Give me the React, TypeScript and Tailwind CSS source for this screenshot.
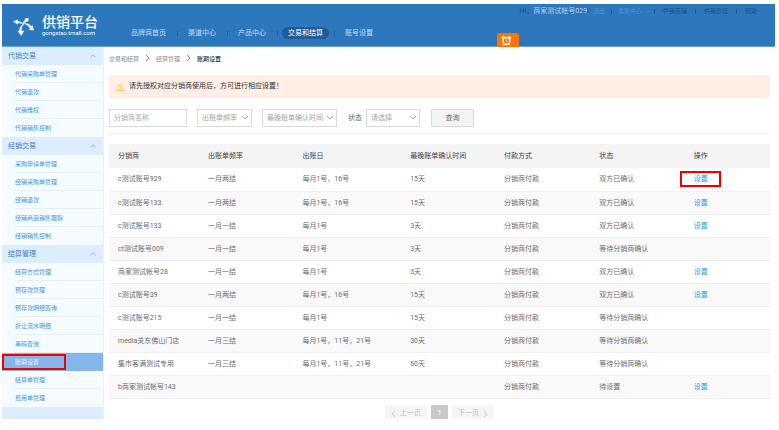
import { useState } from "react";
import clsx from "clsx";

type Account = {
  name: string;
  cycle: string;
  billingDay: string;
  deadline: string;
  status: string;
  editable: boolean;
};

const NAV_ITEMS = ["品牌商首页", "渠道中心", "产品中心", "交易和结算", "账号设置"];
const HELP_LINKS = ["供销店铺", "供销论坛", "帮助"];

const MENU = [
  { title: "代销交易", items: ["代销采购单管理", "代销退款", "代销维权", "代销销售控制"] },
  {
    title: "经销交易",
    items: ["采购申请单管理", "经销采购单管理", "经销退款", "经销商品销售跟踪", "经销销售控制"],
  },
  {
    title: "结算管理",
    items: [
      "结算方式管理",
      "预存款管理",
      "预存款明细查询",
      "折让流水明细",
      "串码查询",
      "账期设置",
      "结算单管理",
      "费用单管理",
    ],
  },
];

const COLUMNS = [
  { label: "分销商", width: "w-[13.6%]" },
  { label: "出账单频率", width: "w-[14.3%]" },
  { label: "出账日", width: "w-[16.3%]" },
  { label: "最晚账单确认时间", width: "w-[14.2%]" },
  { label: "付款方式", width: "w-[14.4%]" },
  { label: "状态", width: "w-[14.3%]" },
  { label: "操作", width: "w-[12.9%]" },
];

const ACCOUNTS: Account[] = [
  { name: "c测试账号929", cycle: "一月两结", billingDay: "每月1号，16号", deadline: "15天", status: "双方已确认", editable: true },
  { name: "c测试账号133", cycle: "一月两结", billingDay: "每月1号，16号", deadline: "15天", status: "双方已确认", editable: true },
  { name: "c测试账号133", cycle: "一月一结", billingDay: "每月1号", deadline: "3天", status: "双方已确认", editable: true },
  { name: "ct测试账号009", cycle: "一月一结", billingDay: "每月1号", deadline: "3天", status: "等待分销商确认", editable: false },
  { name: "商家测试帐号28", cycle: "一月一结", billingDay: "每月1号", deadline: "3天", status: "双方已确认", editable: true },
  { name: "c测试账号39", cycle: "一月两结", billingDay: "每月1号，16号", deadline: "15天", status: "双方已确认", editable: true },
  { name: "c测试账号215", cycle: "一月一结", billingDay: "每月1号", deadline: "15天", status: "等待分销商确认", editable: false },
  { name: "media关东佛山门店", cycle: "一月三结", billingDay: "每月1号，11号，21号", deadline: "30天", status: "等待分销商确认", editable: false },
  { name: "集市客满测试专用", cycle: "一月三结", billingDay: "每月1号，11号，21号", deadline: "60天", status: "等待分销商确认", editable: false },
  { name: "b商家测试帐号143", cycle: "", billingDay: "", deadline: "", status: "待设置", editable: true },
];

function Chevron({ className, d = "M1 1l4 4 4-4" }: { className?: string; d?: string }) {
  return (
    <svg viewBox="0 0 10 6" fill="none" stroke="currentColor" className={className} aria-hidden="true">
      <path d={d} />
    </svg>
  );
}

function SideChevron({ d }: { d: string }) {
  return (
    <svg viewBox="0 0 5 8" fill="none" stroke="currentColor" className="h-2 w-[5px]" aria-hidden="true">
      <path d={d} />
    </svg>
  );
}

function Logo() {
  return (
    <a href="#" className="flex items-start gap-2 text-white">
      <svg
        viewBox="0 0 21 18"
        className="mt-1 h-[18px] w-[21px]"
        fill="currentColor"
        stroke="currentColor"
        strokeWidth="0.4"
        strokeLinejoin="round"
        aria-hidden="true"
      >
        <path d="M.5 3.600 4.600 1.800 4.400 3.200c2.200.1 4 .8 5.200 2.400C7.600 5 6 4.900 4.400 5.100L4.600 6.300z" />
        <path d="M11.800.6 15.600.4 14.900 3.800 14 2.900C11.800 4.300 10.400 6 9.600 8.300 9.300 5.600 10.300 3.300 12.600 1.600z" />
        <path d="M11.400 5.600C14.300 5.300 16.700 6.400 18.400 8.400L19.500 7.600 20.500 12.200 16.200 11.600 17.100 10.400C15.800 8.200 14 6.700 11.400 5.600z" />
        <path d="M9.400 7C7.200 8.600 6.400 10.600 6.600 13L4.800 13.100 8.200 17.500 10.900 13.100 8.900 13.100C8.200 10.900 8.400 9 9.400 7z" />
      </svg>
      <span className="block">
        <span className="block text-[14px] leading-[16px] font-medium">供销平台</span>
        <span className="block text-[6px] leading-[6px]">gongxiao.tmall.com</span>
      </span>
    </a>
  );
}

function Header() {
  return (
    <header className="relative flex h-[43px] justify-between border-b border-[#6a9fd0] bg-[#2d78bc] pr-[18px] pl-[11px]">
      <div className="flex">
        <div className="pt-[10px]">
          <Logo />
        </div>
        <nav className="ml-[22px] pt-[23px]">
          <ul className="flex items-center">
            {NAV_ITEMS.map((item, i) => (
              <li key={item} className="flex items-center">
                <span className={clsx("h-[5px] w-px", i > 0 && "bg-[#2260a4]")} />
                <a
                  href="#"
                  className={clsx(
                    "mr-[5px] ml-1 rounded-full px-[6px] text-[7px] leading-[12px]",
                    item === "交易和结算" ? "bg-[#1f5b94] text-white" : "text-[#c3dbf2]",
                  )}
                >
                  {item}
                </a>
              </li>
            ))}
          </ul>
        </nav>
      </div>

      <div className="flex h-[14px] items-center text-[6px] leading-[8px] text-[#184f87]">
        <span className="text-[7px]">
          HI，<span className="text-[#b4d0ec]">商家测试帐号029</span>!
        </span>
        <a href="#" className="ml-1 text-[#4793e6]">
          退出
        </a>
        <span className="mx-[6px] h-[5px] w-px bg-[#1f5b94]" />
        <a href="#" className="flex items-center gap-[3px] text-[#4793e6]">
          卖家中心
          <Chevron className="h-[3px] w-[5px]" />
        </a>
        {HELP_LINKS.map((link, i) => (
          <span key={link} className="flex items-center">
            <span className={clsx("mr-2 h-[5px] w-px bg-[#1f5b94]", i === 0 ? "ml-1" : "ml-2")} />
            <a href="#">{link}</a>
          </span>
        ))}
      </div>

      <button
        type="button"
        aria-label="提醒"
        className="absolute top-[29px] left-[64%] flex h-[14px] w-[22px] items-center justify-center rounded-t-[3px] bg-[#fb7402] pr-[2px] text-white"
      >
        <svg viewBox="0 0 12 12" className="h-[11px] w-[11px]" fill="none" stroke="currentColor" aria-hidden="true">
          <circle cx="6" cy="6.500" r="3.800" strokeWidth="1.500" />
          <path d="M6 4.500v2.300l1.500.8M3.300 9.700 2.200 11.300M8.700 9.700l1.100 1.600" />
          <path d="M.9 3.500 3.500 1.200M11.100 3.500 8.500 1.200" strokeWidth="1.600" />
        </svg>
      </button>
    </header>
  );
}

function Sidebar() {
  return (
    <aside className="w-[102px] shrink-0 border-r border-[#e6f1fb] bg-[#dcedfd]">
      {MENU.map((group) => (
        <section key={group.title}>
          <h2>
            <button
              type="button"
              className="flex h-[18px] w-full items-center justify-between pr-[7px] pl-[6px] text-[7px] text-[#3f7fba]"
            >
              {group.title}
              <Chevron className="h-1 w-[6px] text-[#5c9bd3]" d="M1 5l4-4 4 4" />
            </button>
          </h2>
          <ul className="bg-[#f5fbff]">
            {group.items.map((item, i) => {
              const active = item === "账期设置";
              return (
                <li key={item} className={clsx("relative pl-[13px]", active && "bg-[#85b6ea]")}>
                  <a
                    href="#"
                    className={clsx(
                      "block h-[18px] text-[6px] leading-[18px]",
                      active ? "text-[#e4f1fd]" : "text-[#4f92cc]",
                      i < group.items.length - 1 && !active && "border-b border-[#e3eff9]",
                    )}
                  >
                    {item}
                  </a>
                  {active && (
                    <span className="pointer-events-none absolute top-px left-0 h-4 w-16 border-2 border-[#f00000]" />
                  )}
                </li>
              );
            })}
          </ul>
        </section>
      ))}
    </aside>
  );
}

function FilterSelect({ label, className }: { label: string; className: string }) {
  return (
    <span className={clsx("relative block", className)}>
      <select
        aria-label={label}
        className="h-[18px] w-full appearance-none border border-[#d9d9d9] bg-white pl-1 text-[7px] text-[#a3a3a3]"
      >
        <option>{label}</option>
      </select>
      <Chevron className="pointer-events-none absolute top-[6px] right-[3px] h-[5px] w-2 text-[#888]" />
    </span>
  );
}

function Filters() {
  const [name, setName] = useState("");

  return (
    <form
      onSubmit={(e) => e.preventDefault()}
      className="mt-[11px] flex items-center border-b border-[#f0f0f0] pb-[6px] text-[7px]"
    >
      <input
        type="text"
        aria-label="分销商名称"
        placeholder="分销商名称"
        value={name}
        onChange={(e) => setName(e.target.value)}
        className="h-[18px] w-[78px] border border-[#d9d9d9] px-1 text-[7px] placeholder:text-[#a9a9a9]"
      />
      <FilterSelect label="出账单频率" className="ml-[10px] w-[55px]" />
      <FilterSelect label="最晚账单确认时间" className="ml-[10px] w-[75px]" />
      <span className="mr-1 ml-[11px] text-[#666]">状态</span>
      <FilterSelect label="请选择" className="w-[54px]" />
      <button
        type="submit"
        className="ml-[11px] h-[18px] w-[43px] rounded-[1px] border border-[#d9d9d9] bg-[#f4f4f4] text-[#666]"
      >
        查询
      </button>
    </form>
  );
}

function AccountTable() {
  return (
    <table className="mt-[10px] w-full table-fixed text-left text-[7px] leading-[8px] text-[#6c6c6c]">
      <thead>
        <tr className="h-6 bg-[#f4f4f4] text-[#444]">
          {COLUMNS.map((col) => (
            <th key={col.label} className={clsx("pl-[9px] font-normal", col.width)}>
              {col.label}
            </th>
          ))}
        </tr>
      </thead>
      <tbody>
        {ACCOUNTS.map((row, i) => (
          <tr key={i} className="h-[23px] border-b border-[#efefef] even:bg-[#f9f9f9]">
            <td className="pl-[9px]">{row.name}</td>
            <td className="pl-[9px]">{row.cycle}</td>
            <td className="pl-[9px]">{row.billingDay}</td>
            <td className="pl-[9px]">{row.deadline}</td>
            <td className="pl-[9px]">分销商付款</td>
            <td className="pl-[9px]">{row.status}</td>
            <td className="pl-[9px]">
              {row.editable && (
                <a href="#" className="relative text-[#2b9fd9]">
                  设置
                  {i === 0 && (
                    <span className="pointer-events-none absolute -top-1 -left-[14px] h-4 w-[41px] border-2 border-[#f00000]" />
                  )}
                </a>
              )}
            </td>
          </tr>
        ))}
      </tbody>
    </table>
  );
}

function Pagination() {
  return (
    <nav aria-label="分页" className="mt-[6px] flex h-[14px] justify-center gap-1 overflow-hidden text-[7px] text-[#c4c4c4]">
      <button type="button" className="flex h-[18px] w-[42px] items-center justify-center gap-1 rounded-[1px] bg-[#f5f5f5]">
        <SideChevron d="M4 1 1 4l3 3" />
        上一页
      </button>
      <button type="button" className="h-[18px] w-[17px] rounded-[1px] bg-[#c9c9c9] text-white">
        1
      </button>
      <button type="button" className="flex h-[18px] w-[42px] items-center justify-center gap-1 rounded-[1px] bg-[#f5f5f5]">
        下一页
        <SideChevron d="M1 1l3 3-3 3" />
      </button>
    </nav>
  );
}

export default function App() {
  return (
    <div className="bg-white pt-1 pr-1 pl-[2px] font-[Roboto,'Noto_Sans_CJK_SC',sans-serif]">
      <Header />
      <div className="flex">
        <Sidebar />
        <main className="min-w-0 flex-1 pr-[5px] pl-[5px]">
          <nav aria-label="面包屑" className="flex h-[22px] items-center gap-[6px] text-[6px] text-[#8c8c8c]">
            <a href="#">交易和结算</a>
            <SideChevron d="M1 1l3 3-3 3" />
            <a href="#">结算管理</a>
            <SideChevron d="M1 1l3 3-3 3" />
            <span className="font-medium text-[#333]">账期设置</span>
          </nav>
          <div className="mt-[6px] flex h-[23px] items-center gap-1 rounded-[2px] bg-[#feeee4] pl-[7px] text-[7px] text-[#333]">
            <svg viewBox="0 0 18 16" className="h-2 w-[9px]" fill="none" stroke="#f9c23c" strokeWidth="1.500" aria-hidden="true">
              <path d="M9 1.500 17 15H1zM9 6v5M9 12v1.500" />
            </svg>
            请先授权对应分销商使用后，方可进行相应设置！
          </div>
          <Filters />
          <AccountTable />
          <Pagination />
        </main>
      </div>
    </div>
  );
}
